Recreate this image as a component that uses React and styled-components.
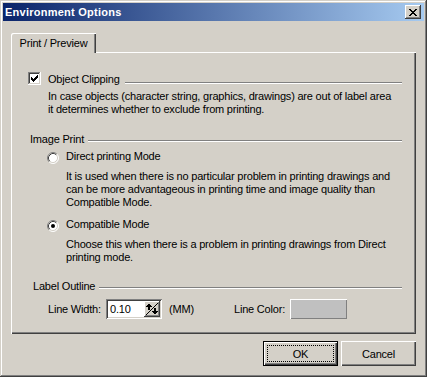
import React from 'react';
import styled, { createGlobalStyle } from 'styled-components';

const GlobalStyle = createGlobalStyle`
    html, body {
        margin: 0;
        padding: 0;
        background: #d4d0c8;
    }
    body {
        font-family: "Liberation Sans", Arial, sans-serif;
        font-size: 11px;
        letter-spacing: -0.2px;
        color: #000;
    }
`

const Window = styled.div`
    box-sizing: border-box;
    width: 427px;
    height: 377px;
    padding: 3px;
    background: #d4d0c8;
    box-shadow: inset -1px -1px #404040, inset 1px 1px #d4d0c8,
        inset -2px -2px #808080, inset 2px 2px #ffffff;
    display: flex;
    flex-direction: column;
`

const TitleBar = styled.div`
    height: 18px;
    display: flex;
    align-items: center;
    justify-content: space-between;
    padding: 0 3px 0 2px;
    background: linear-gradient(to right, #0a246a, #a6caf0);
`

const Title = styled.span`
    color: #ffffff;
    font-weight: bold;
    font-size: 11px;
    letter-spacing: 0.25px;
`

const CloseButton = styled.div`
    width: 16px;
    height: 14px;
    display: flex;
    align-items: center;
    justify-content: center;
    background: #d4d0c8;
    box-shadow: inset -1px -1px #404040, inset 1px 1px #ffffff,
        inset -2px -2px #808080;
`

const Body = styled.div`
    padding: 12px 8px 8px 8px;
    display: flex;
    flex-direction: column;
`

const TabStrip = styled.div`
    display: flex;
    height: 19px;
    position: relative;
    z-index: 1;
`

const Tab = styled.div`
    width: 85px;
    height: 20px;
    box-sizing: border-box;
    display: flex;
    align-items: center;
    justify-content: center;
    padding-bottom: 1px;
    background: #d4d0c8;
    border-top-left-radius: 2px;
    box-shadow: inset 1px 1px #ffffff, inset -1px 0 #404040, inset -2px 0 #808080;
`

const Panel = styled.div`
    box-sizing: border-box;
    height: 282px;
    display: flex;
    flex-direction: column;
    box-shadow: inset 1px 1px #ffffff, inset -1px -1px #404040,
        inset -2px -2px #808080;
`

const HeaderRow = styled.div`
    display: flex;
    align-items: center;
    height: 13px;
    margin-top: ${({ $mt }) => $mt}px;
    padding-left: ${({ $pl }) => $pl}px;
    white-space: nowrap;
`

const Rule = styled.div`
    flex: 1;
    align-self: flex-start;
    height: 1px;
    margin-top: ${({ $top }) => $top}px;
    margin-left: ${({ $gap }) => $gap}px;
    margin-right: 14px;
    background: #808080;
    border-bottom: 1px solid #ffffff;
`

const OptionRow = styled.div`
    display: flex;
    align-items: flex-start;
    height: 13px;
    margin-top: ${({ $mt }) => $mt}px;
    padding-left: ${({ $pl }) => $pl}px;
    white-space: nowrap;
`

const RadioMark = styled.svg`
    width: 12px;
    height: 12px;
    margin-top: 2px;
    margin-right: 7px;
    flex: none;
`

const CheckMark = styled.svg`
    width: 13px;
    height: 13px;
    margin-right: 7px;
    flex: none;
`

const Desc = styled.div`
    margin-top: ${({ $mt }) => $mt}px;
    padding-left: ${({ $pl }) => $pl}px;
    line-height: 13px;
    white-space: nowrap;
`

const FieldRow = styled.div`
    display: flex;
    align-items: center;
    height: 20px;
    margin-top: 7px;
    padding-left: 37px;
    white-space: nowrap;
`

const FieldLabel = styled.span`
    flex: none;
    width: ${({ $w }) => $w}px;
    padding-left: ${({ $pl }) => $pl || 0}px;
    box-sizing: border-box;
`

const SpinBox = styled.div`
    box-sizing: border-box;
    width: 56px;
    height: 20px;
    padding: 2px;
    display: flex;
    background: #ffffff;
    box-shadow: inset 1px 1px #808080, inset -1px -1px #ffffff,
        inset 2px 2px #404040, inset -2px -2px #d4d0c8;
`

const SpinValue = styled.span`
    flex: 1;
    padding-left: 2px;
    line-height: 16px;
`

const ColorSwatch = styled.div`
    box-sizing: border-box;
    width: 57px;
    height: 20px;
    background: #c0c0c0;
    box-shadow: inset 1px 1px #ffffff, inset -1px -1px #808080;
`

const ButtonRow = styled.div`
    display: flex;
    justify-content: flex-end;
    gap: 3px;
    margin-top: 7px;
`

const Button = styled.div`
    box-sizing: border-box;
    width: 75px;
    height: 25px;
    display: flex;
    align-items: center;
    justify-content: center;
    position: relative;
    background: #d4d0c8;
    border: ${({ $default }) => ($default ? '1px solid #000000' : 'none')};
    box-shadow: inset 1px 1px #ffffff, inset -1px -1px #404040,
        inset -2px -2px #808080;

    &::after {
        content: '';
        display: ${({ $default }) => ($default ? 'block' : 'none')};
        position: absolute;
        inset: 3px;
        border: 1px dotted #000000;
    }
`

const Radio = ({ checked }) => (
    <RadioMark viewBox="0 0 12 12">
        <circle cx="6" cy="6" r="5" fill="#ffffff" />
        <path d="M2.11 9.89 A5.5 5.5 0 0 1 9.89 2.11" stroke="#808080" fill="none" />
        <path d="M9.89 2.11 A5.5 5.5 0 0 1 2.11 9.89" stroke="#ffffff" fill="none" />
        <path d="M2.82 9.18 A4.5 4.5 0 0 1 9.18 2.82" stroke="#404040" fill="none" />
        <path d="M9.18 2.82 A4.5 4.5 0 0 1 2.82 9.18" stroke="#d4d0c8" fill="none" />
        {checked && <circle cx="6" cy="6" r="2" fill="#000000" />}
    </RadioMark>
)

const Checkbox = () => (
    <CheckMark viewBox="0 0 13 13" shapeRendering="crispEdges">
        <rect x="0" y="0" width="13" height="13" fill="#ffffff" />
        <rect x="0" y="0" width="12" height="1" fill="#808080" />
        <rect x="0" y="0" width="1" height="12" fill="#808080" />
        <rect x="1" y="1" width="10" height="1" fill="#404040" />
        <rect x="1" y="1" width="1" height="10" fill="#404040" />
        <rect x="1" y="11" width="11" height="1" fill="#d4d0c8" />
        <rect x="11" y="1" width="1" height="11" fill="#d4d0c8" />
        <path
            d="M9 3h1v3H9z M8 4h1v3H8z M7 5h1v3H7z M6 6h1v3H6z M5 7h1v3H5z M4 6h1v3H4z M3 5h1v3H3z"
            fill="#000000"
        />
    </CheckMark>
)

const SpinGlyph = () => (
    <svg width="16" height="16" viewBox="0 0 16 16" shapeRendering="crispEdges">
        <rect x="0" y="0" width="16" height="16" fill="#d4d0c8" />
        <rect x="0" y="0" width="15" height="1" fill="#ffffff" />
        <rect x="0" y="0" width="1" height="15" fill="#ffffff" />
        <rect x="0" y="15" width="16" height="1" fill="#404040" />
        <rect x="15" y="0" width="1" height="16" fill="#404040" />
        <rect x="1" y="14" width="14" height="1" fill="#808080" />
        <rect x="14" y="1" width="1" height="14" fill="#808080" />
        <path
            d="M1 14h1v-1h1v-1h1v-1h1v-1h1v-1h1v-1h1v-1h1v-1h1v-1h1v-1h1v-1h1v-1h1v1h-1v1h-1v1h-1v1h-1v1h-1v1h-1v1h-1v1h-1v1h-1v1h-1v1h-1v1H1z"
            fill="#000000"
        />
        <path d="M4 3h2v1h1v1h1v1H6v3H4V6H2V5h1V4h1z" fill="#000000" />
        <path d="M10 7h2v3h2v1h-1v1h-1v1h-2v-1H9v-1H8v-1h2z" fill="#000000" />
    </svg>
)

const CloseGlyph = () => (
    <svg width="8" height="7" viewBox="0 0 8 7" shapeRendering="crispEdges">
        <path
            d="M0 0h2v1H0z M6 0h2v1H6z M1 1h2v1H1z M5 1h2v1H5z M2 2h4v1H2z M3 3h2v1H3z M2 4h4v1H2z M1 5h2v1H1z M5 5h2v1H5z M0 6h2v1H0z M6 6h2v1H6z"
            fill="#000000"
        />
    </svg>
)

const App = () => {
    return (
        <>
            <GlobalStyle />
            <Window>
                <TitleBar>
                    <Title>Environment Options</Title>
                    <CloseButton>
                        <CloseGlyph />
                    </CloseButton>
                </TitleBar>
                <Body>
                    <TabStrip>
                        <Tab>Print / Preview</Tab>
                    </TabStrip>
                    <Panel>
                        <HeaderRow $mt={20} $pl={17}>
                            <Checkbox />
                            Object Clipping
                            <Rule $top={10} $gap={5} />
                        </HeaderRow>
                        <Desc $mt={5} $pl={37}>
                            In case objects (character string, graphics, drawings) are out of label area
                            <br />
                            it determines whether to exclude from printing.
                        </Desc>

                        <HeaderRow $mt={16} $pl={19}>
                            Image Print
                            <Rule $top={8} $gap={4} />
                        </HeaderRow>
                        <OptionRow $mt={5} $pl={36}>
                            <Radio />
                            Direct printing Mode
                        </OptionRow>
                        <Desc $mt={7} $pl={55}>
                            It is used when there is no particular problem in printing drawings and
                            <br />
                            can be more advantageous in printing time and image quality than
                            <br />
                            Compatible Mode.
                        </Desc>
                        <OptionRow $mt={9} $pl={36}>
                            <Radio checked />
                            Compatible Mode
                        </OptionRow>
                        <Desc $mt={7} $pl={55}>
                            Choose this when there is a problem in printing drawings from Direct
                            <br />
                            printing mode.
                        </Desc>

                        <HeaderRow $mt={15} $pl={22}>
                            Label Outline
                            <Rule $top={8} $gap={4} />
                        </HeaderRow>
                        <FieldRow>
                            <FieldLabel $w={58}>Line Width:</FieldLabel>
                            <SpinBox>
                                <SpinValue>0.10</SpinValue>
                                <SpinGlyph />
                            </SpinBox>
                            <FieldLabel $w={72} $pl={7}>(MM)</FieldLabel>
                            <FieldLabel $w={56}>Line Color:</FieldLabel>
                            <ColorSwatch />
                        </FieldRow>
                    </Panel>
                    <ButtonRow>
                        <Button $default>OK</Button>
                        <Button>Cancel</Button>
                    </ButtonRow>
                </Body>
            </Window>
        </>
    )
}

export default App
